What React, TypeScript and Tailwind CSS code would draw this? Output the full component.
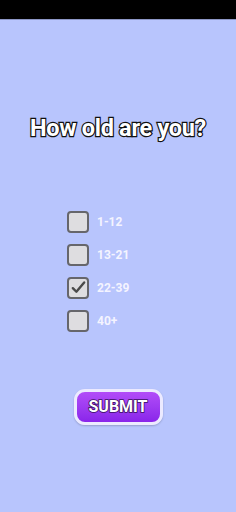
import React from "react";

const ages = ["1-12", "13-21", "22-39", "40+"];

export default function App() {
  return (
    <div className="w-[236px] h-[512px] flex flex-col bg-[#b8c5fd]" style={{ fontFamily: "Roboto, 'Liberation Sans', sans-serif" }}>
      <div className="h-[19px] bg-black shrink-0" />
      <div className="h-[1px] bg-[#8d97c6] shrink-0" />
      <div className="flex flex-col items-center">
        <h1
          className="mt-[97px] text-[23.5px] font-bold text-white leading-none tracking-[-0.3px]"
          style={{ WebkitTextStroke: "2.4px #111", paintOrder: "stroke fill" }}
        >
          How old are you?
        </h1>
        <div className="self-start ml-[67px] mt-[70px] flex flex-col gap-[11px]">
          {ages.map((a, i) => (
            <div key={a} className="flex items-center gap-[8px] h-[22px]">
              <div className="w-[22px] h-[22px] rounded-[4px] border-2 border-[#66666b] bg-[#dedde0] flex items-center justify-center">
                {i === 2 && (
                  <svg width="17" height="17" viewBox="0 0 24 24" fill="none" stroke="#4a4a4a" strokeWidth="3.4" strokeLinecap="round" strokeLinejoin="round">
                    <path d="M4 13l5 5L20 5" />
                  </svg>
                )}
              </div>
              <span className="text-[12px] font-bold text-[#f4f4ff]">{a}</span>
            </div>
          ))}
        </div>
        <button
          className="mt-[57px] w-[89px] h-[36px] rounded-[11px] border-[3px] border-[#eceaff] bg-gradient-to-b from-[#b24cf8] to-[#8a24ea] flex items-center justify-center shadow-[0_1px_2px_rgba(0,0,0,0.2)]"
        >
          <span
            className="text-[16px] font-bold text-white leading-none"
            style={{ WebkitTextStroke: "1.6px #3a1060", paintOrder: "stroke fill" }}
          >
            SUBMIT
          </span>
        </button>
      </div>
    </div>
  );
}
